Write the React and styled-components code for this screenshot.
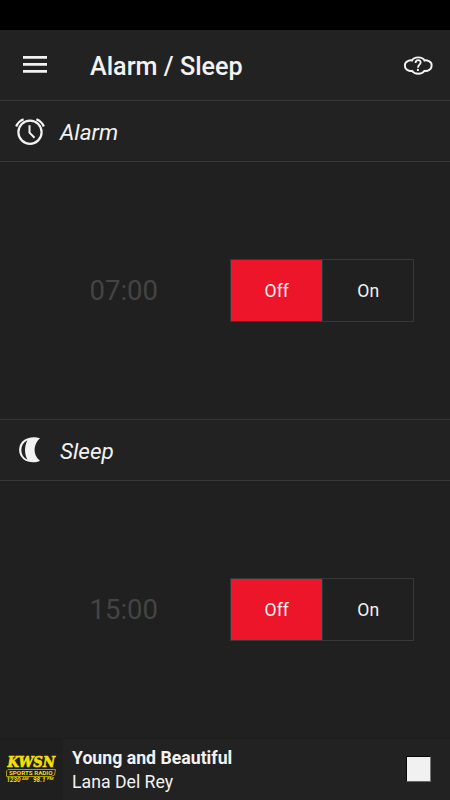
import React from 'react';
import styled, { createGlobalStyle } from 'styled-components';

const GlobalStyle = createGlobalStyle`
  * { box-sizing: border-box; }
  body { margin: 0; background: #202020; }
`;

const Screen = styled.div`
  width: 450px;
  height: 800px;
  display: flex;
  flex-direction: column;
  overflow: hidden;
  background: #202020;
  color: #f2f2f2;
  font-family: Roboto, sans-serif;
`;

const StatusBar = styled.div`
  height: 30px;
  flex: none;
  background: #000;
`;

const Header = styled.header`
  height: 71px;
  flex: none;
  display: flex;
  align-items: center;
  padding: 1px 16px 0 22px;
  background: #222;
  border-bottom: 1px solid #383838;
`;

const IconButton = styled.button`
  display: flex;
  padding: 0;
  border: 0;
  background: none;
  color: inherit;
`;

const Title = styled.h1`
  flex: 1;
  margin: 2px 0 0 42px;
  font-size: 25.2px;
  line-height: 30px;
  font-weight: 500;
  white-space: nowrap;
`;

const SectionHeader = styled.div`
  height: ${(p) => (p.$ruled ? 62 : 61)}px;
  flex: none;
  display: flex;
  align-items: center;
  padding-left: 14px;
  background: #222;
  border-top: ${(p) => (p.$ruled ? '1px solid #383838' : '0')};
  border-bottom: 1px solid #383838;
`;

const SectionTitle = styled.h2`
  margin: 4px 0 0 14px;
  font-size: 22.6px;
  line-height: 28px;
  font-style: italic;
  font-weight: 400;
`;

const Panel = styled.section`
  height: 257px;
  flex: none;
  display: flex;
  align-items: center;
  padding-left: 89px;
`;

const Time = styled.div`
  width: 141px;
  padding-left: 0.5px;
  font-size: 27.5px;
  line-height: 34px;
  color: #444;
`;

const Toggle = styled.div`
  width: 184px;
  height: 63px;
  display: flex;
  border: 1px solid #383838;
`;

const Option = styled.button`
  flex: 1;
  padding: 0 0 0 1px;
  border: 0;
  border-right: ${(p) => (p.$active ? '1px solid #12403f' : '0')};
  background: ${(p) => (p.$active ? '#ed1529' : 'transparent')};
  color: #f2f2f2;
  font: 400 17.6px Roboto, sans-serif;
`;

const Player = styled.footer`
  flex: 1;
  display: flex;
  align-items: center;
  background: #222;
  border-top: 1px solid #1c1c1c;
`;

const Artwork = styled.div`
  width: 63px;
  height: 61px;
  flex: none;
  background: #1f1f1f;
`;

const Track = styled.div`
  flex: 1;
  padding-left: 9px;
  font-size: 17.7px;
  line-height: 24px;
  white-space: nowrap;
`;

const Song = styled.div`
  font-weight: 700;
`;

const StopButton = styled.button`
  width: 25px;
  height: 26px;
  margin: 0 19px 2px 0;
  padding: 0;
  border: 1px solid #080808;
  border-right-color: #777;
  border-bottom-color: #666;
  background: #f1f1f1;
`;

const MenuIcon = () => (
  <svg width="26" height="20" viewBox="0 0 26 20" fill="currentColor">
    <path d="M1 0h24v2.800H1zM1 7h24v2.800H1zM1 14h24v2.800H1z" />
  </svg>
);

const HelpCloudIcon = () => (
  <svg width="32" height="22" viewBox="0 0 32 22" fill="none" stroke="currentColor" strokeWidth="1.9">
    <path d="M10 5.500C12 1.300 20.500 1.300 22.500 5.500C24 5 30.300 5.700 29.600 10.700C29.400 15.200 25 16.500 22.500 15.800C20 19.800 12.500 19.800 10 15.800C7.500 16.500 3.100 15.200 2.900 10.700C2.500 5.700 8.500 5 10 5.500Z" />
    <path d="M13.500 8C13.700 4 19.200 4.400 18.600 7.800C18.200 9.700 16 10 16 12.800" strokeWidth="1.800" />
    <path d="M15.900 13.900v2.100" />
  </svg>
);

const AlarmIcon = () => (
  <svg width="32" height="30" viewBox="0 0 32 30" fill="none" stroke="currentColor">
    <circle cx="16" cy="16.200" r="11.600" strokeWidth="2.200" />
    <path d="M15.500 9.200v7.500l5 5" strokeWidth="2" />
    <path d="M2.200 10.500Q4.200 5.300 9.600 3.200M22.400 3.200Q27.800 5.300 29.800 10.500" strokeWidth="2.300" />
  </svg>
);

const MoonIcon = () => (
  <svg width="32" height="30" viewBox="0 0 32 30">
    <path
      fill="currentColor"
      d="M26 3.300C22 1.900 17.500 2 14 3.300C2.200 6.500 2.200 23 14 26.600C18 27.800 22.500 27.600 26 25.800C18.800 20.500 18.800 9.500 26 3.300Z"
    />
    <path fill="#222" d="M13.500 5.300C5.300 8.800 5.300 21.200 13.500 24.700C10.200 19 10.200 11 13.500 5.300Z" />
  </svg>
);

const StationLogo = () => (
  <svg width="63" height="61" viewBox="0 0 63 61" fill="#f2df0b" fontWeight="700" fontStyle="italic">
    <text x="7.500" y="28" fontSize="14.500" textLength="47.500" lengthAdjust="spacingAndGlyphs" fontFamily="'DejaVu Serif', serif" stroke="#f2df0b" strokeWidth="0.700">KWSN</text>
    <path d="M8 30.500H55.500L54.500 36L51 37.500H6.500V32Z" fill="none" stroke="#a99c0a" strokeWidth="1" />
    <g fontFamily="Roboto, sans-serif">
      <text x="9" y="35.800" fontSize="5" textLength="43.500" lengthAdjust="spacingAndGlyphs" fontStyle="normal">SPORTS RADIO</text>
      <text x="6.500" y="43" fontSize="6.500" textLength="14" lengthAdjust="spacingAndGlyphs">1230</text>
      <text x="22" y="41" fontSize="4.200" textLength="6.500" lengthAdjust="spacingAndGlyphs">AM</text>
      <text x="33" y="43" fontSize="6.500" textLength="12.500" lengthAdjust="spacingAndGlyphs">98.1</text>
      <text x="47" y="41" fontSize="4.200" textLength="6.500" lengthAdjust="spacingAndGlyphs">FM</text>
    </g>
  </svg>
);

const OnOffToggle = () => (
  <Toggle>
    <Option $active>Off</Option>
    <Option>On</Option>
  </Toggle>
);

export default function App() {
  return (
    <>
      <GlobalStyle />
      <Screen>
        <StatusBar />
        <Header>
          <IconButton aria-label="Menu"><MenuIcon /></IconButton>
          <Title>Alarm / Sleep</Title>
          <IconButton aria-label="Help"><HelpCloudIcon /></IconButton>
        </Header>
        <SectionHeader>
          <AlarmIcon />
          <SectionTitle>Alarm</SectionTitle>
        </SectionHeader>
        <Panel>
          <Time>07:00</Time>
          <OnOffToggle />
        </Panel>
        <SectionHeader $ruled>
          <MoonIcon />
          <SectionTitle>Sleep</SectionTitle>
        </SectionHeader>
        <Panel>
          <Time>15:00</Time>
          <OnOffToggle />
        </Panel>
        <Player>
          <Artwork><StationLogo /></Artwork>
          <Track>
            <Song>Young and Beautiful</Song>
            <div>Lana Del Rey</div>
          </Track>
          <StopButton aria-label="Stop" />
        </Player>
      </Screen>
    </>
  );
}
